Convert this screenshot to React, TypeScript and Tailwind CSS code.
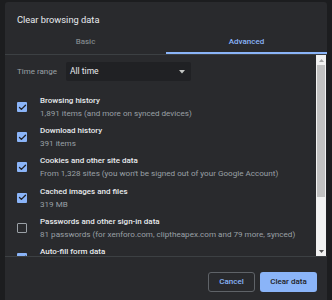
import { Check } from "lucide-react"

interface Item {
  title: string
  detail: string
  checked: boolean
}

const items: Item[] = [
  { title: "Browsing history", detail: "1,891 items (and more on synced devices)", checked: true },
  { title: "Download history", detail: "391 items", checked: true },
  {
    title: "Cookies and other site data",
    detail: "From 1,328 sites (you won't be signed out of your Google Account)",
    checked: true,
  },
  { title: "Cached images and files", detail: "319 MB", checked: true },
  {
    title: "Passwords and other sign-in data",
    detail: "81 passwords (for xenforo.com, cliptheapex.com and 79 more, synced)",
    checked: false,
  },
  { title: "Auto-fill form data", detail: "", checked: true },
]

function Checkbox({ checked }: { checked: boolean }) {
  if (checked) {
    return (
      <div className="flex h-[10px] w-[10px] shrink-0 items-center justify-center rounded-[1px] bg-[#8ab4f8]">
        <Check className="h-[9px] w-[9px] text-[#202124]" strokeWidth={3.5} />
      </div>
    )
  }
  return <div className="h-[10px] w-[10px] shrink-0 rounded-[1px] border border-[#9aa0a6]" />
}

export default function App() {
  return (
    <div
      className="h-[300px] w-[332px] overflow-hidden bg-[#1c1d1f] pl-[5px] pt-[2px]"
      style={{ fontFamily: "Roboto, 'Liberation Sans', sans-serif" }}
    >
      <div className="flex h-[310px] w-[322px] flex-col rounded-t-[3px] bg-[#292a2d]">
        <div className="h-[32px] pl-[12px] pt-[11px] text-[9.3px] leading-[13px] text-[#e8eaed]">
          Clear browsing data
        </div>

        {/* tabs */}
        <div className="flex h-[21px] border-b border-[#3c4043] text-[8px] font-medium">
          <div className="flex flex-1 items-start justify-center pt-[2px] text-[#80868b]">Basic</div>
          <div className="flex flex-1 items-start justify-center border-b-2 border-[#8ab4f8] pt-[2px] text-[#8ab4f8]">
            Advanced
          </div>
        </div>

        {/* scroll area */}
        <div className="flex h-[202px] border-b border-[#3c4043]">
          <div className="flex-1 overflow-hidden pl-[12px] pt-[7px]">
            <div className="flex h-[19px] items-center">
              <span className="w-[49px] text-[8px] text-[#9aa0a6]">Time range</span>
              <div className="flex h-[19px] w-[125px] items-center justify-between rounded-[2px] bg-[#202124] pl-[4px] pr-[6px] text-[8.5px] text-[#e8eaed]">
                All time
                <svg width="6" height="4" viewBox="0 0 6 4">
                  <path d="M0 0 L6 0 L3 3.5 Z" fill="#c4c7c5" />
                </svg>
              </div>
            </div>
            <div className="mt-[11px] flex flex-col">
              {items.map((item) => (
                <div key={item.title} className="flex h-[30.2px] items-center gap-[13px]">
                  <Checkbox checked={item.checked} />
                  <div className="flex flex-col whitespace-nowrap">
                    <span className="h-[12px] text-[8px] font-medium leading-[12px] text-[#e8eaed]">{item.title}</span>
                    <span className="h-[12px] text-[8.1px] leading-[12px] text-[#9aa0a6]">{item.detail}</span>
                  </div>
                </div>
              ))}
            </div>
          </div>

          {/* scrollbar */}
          <div className="flex w-[10px] flex-col bg-[#f1f1f1]">
            <div className="flex h-[10px] items-center justify-center">
              <svg width="5" height="3" viewBox="0 0 5 3">
                <path d="M0 3 L5 3 L2.5 0 Z" fill="#a3a3a3" />
              </svg>
            </div>
            <div className="mx-[1px] h-[132px] bg-[#c1c1c1]" />
            <div className="flex-1" />
            <div className="flex h-[10px] items-center justify-center">
              <svg width="5" height="3" viewBox="0 0 5 3">
                <path d="M0 0 L5 0 L2.5 3 Z" fill="#505050" />
              </svg>
            </div>
          </div>
          <div className="w-px bg-[#202124]" />
        </div>

        {/* buttons */}
        <div className="flex justify-end gap-[5px] pr-[10px] pt-[15px]">
          <button className="h-[20px] w-[47px] rounded-[3px] border border-[#5f6368] text-[8px] font-medium text-[#8ab4f8]">
            Cancel
          </button>
          <button className="h-[20px] w-[57px] rounded-[3px] bg-[#8ab4f8] text-[8px] font-medium text-[#202124]">
            Clear data
          </button>
        </div>
      </div>
    </div>
  )
}
